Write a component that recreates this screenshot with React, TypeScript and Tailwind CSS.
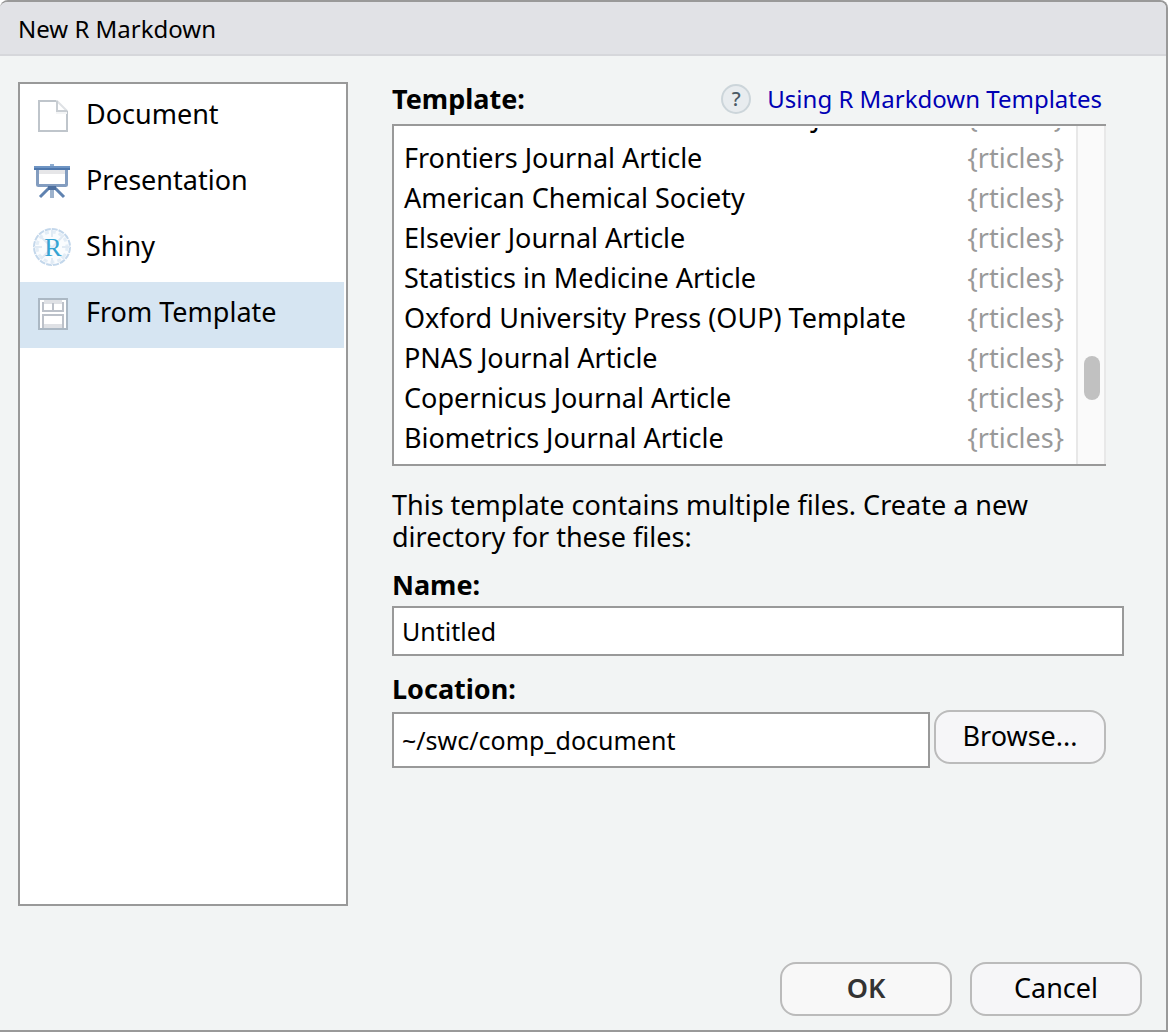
import React, { useState } from 'react';

function DocumentIcon() {
  return (
    <svg width="40" height="40" viewBox="0 0 40 40" fill="none" aria-hidden="true">
      <path d="M7 5H25L35 15V35H7Z" fill="#fff" stroke="#dfe2e5" strokeWidth="2" />
      <path d="M24 5H7V35H35V15" stroke="#bfc5cb" strokeWidth="2" />
      <path d="M24 14h11v4H24z" fill="#f4f5f6" />
      <path d="M25 5V15H35" stroke="#c9ced3" strokeWidth="2" />
    </svg>
  );
}

function PresentationIcon() {
  return (
    <svg width="40" height="40" viewBox="0 0 40 40" fill="none" aria-hidden="true">
      <path d="M18 2h4v3h-4z" fill="#8fadd0" />
      <rect x="5.5" y="7.5" width="29" height="16" rx="1" fill="#fff" stroke="#839dc0" strokeWidth="3" />
      <path d="M7 8h26v4H7z" fill="#e6e6e8" />
      <path d="M2 4h36v2H2z" fill="#6f95c4" />
      <path d="M2 6h36v2H2z" fill="#4f78ad" />
      <path d="M18 25L8 35M22 25L32 35" stroke="#5f82b0" strokeWidth="3" />
      <path d="M18 25h4v11h-4z" fill="#9db2cc" />
      <path d="M16 24h8v4h-8z" fill="#4c6f9f" />
    </svg>
  );
}

function ShinyIcon() {
  return (
    <svg width="40" height="40" viewBox="0 0 40 40" fill="none" aria-hidden="true">
      <circle cx="20" cy="19" r="18" fill="#fafcfe" stroke="#c3d7eb" strokeWidth="2" strokeDasharray="6 1" />
      <circle cx="20" cy="19" r="15" stroke="#e3edf6" strokeWidth="3" strokeDasharray="4 3" />
      <path d="M8 8L32 31M32 7L9 31M20 2V9M2 19H10M30 19H38M20 30V37" stroke="#e0eaf4" strokeWidth="2" />
      <text x="21" y="28" textAnchor="middle" fontFamily="Liberation Serif, serif" fontSize="26" fill="#35a4d3">
        R
      </text>
    </svg>
  );
}

function TemplateIcon() {
  return (
    <svg width="40" height="40" viewBox="0 0 40 40" fill="none" aria-hidden="true">
      <rect x="7" y="5" width="28" height="30" fill="#fff" stroke="#abb8c4" strokeWidth="2" />
      <path d="M12 6h18v4H12z" fill="#dfe1e5" />
      <path d="M11 8v9h20V8M21 9v8" stroke="#bcc1c9" strokeWidth="2" />
      <path d="M11 34V21h20v13" stroke="#bcc1c9" strokeWidth="2" />
      <path d="M12 30h18v4H12z" fill="#dfe1e5" />
    </svg>
  );
}

const categories = [
  { name: 'Document', Icon: DocumentIcon },
  { name: 'Presentation', Icon: PresentationIcon },
  { name: 'Shiny', Icon: ShinyIcon },
  { name: 'From Template', Icon: TemplateIcon },
];

const templates = [
  'American Economic Association Journal',
  'Frontiers Journal Article',
  'American Chemical Society',
  'Elsevier Journal Article',
  'Statistics in Medicine Article',
  'Oxford University Press (OUP) Template',
  'PNAS Journal Article',
  'Copernicus Journal Article',
  'Biometrics Journal Article',
];

const buttonClass =
  'h-[54px] w-[172px] shrink-0 rounded-2xl border-2 border-[#bbb] bg-[#f6f6f8] pb-0.5 text-[27px] leading-8 text-black';

export default function App() {
  const [category, setCategory] = useState('From Template');
  const [name, setName] = useState('Untitled');
  const [location, setLocation] = useState('~/swc/comp_document');

  return (
    <div className="bg-white font-['Noto_Sans',sans-serif] text-black">
      <div
        role="dialog"
        aria-labelledby="dialog-title"
        className="flex min-h-screen flex-col overflow-hidden rounded-t-lg border-t-2 border-r-2 border-b-2 border-[#999] bg-[#f2f4f4]"
      >
        <header className="flex h-[54px] items-center border-b-2 border-[#d6d7db] bg-[#e1e2e6] px-[18px] pt-0.5">
          <h1 id="dialog-title" className="text-[24px] leading-8">
            New R Markdown
          </h1>
        </header>

        <main className="flex flex-1 items-stretch gap-11 pt-[26px] pr-[42px] pl-[18px]">
          <nav className="w-[330px] shrink-0 border-2 border-[#999] bg-white pr-0.5">
            {categories.map(({ name: label, Icon }) => (
              <button
                key={label}
                type="button"
                onClick={() => setCategory(label)}
                className={
                  label === category
                    ? 'flex h-[66px] w-full items-center gap-[14px] bg-[#d6e5f2] pb-0.5 pl-3 text-left text-[27px] leading-8'
                    : 'flex h-[66px] w-full items-center gap-[14px] pb-0.5 pl-3 text-left text-[27px] leading-8'
                }
              >
                <Icon />
                <span className="pb-1">{label}</span>
              </button>
            ))}
          </nav>

          <section className="flex min-w-0 flex-1 flex-col">
            <div className="flex h-[42px] items-center justify-between pr-[22px] pb-2">
              <h2 id="template-label" className="text-[27px] leading-8 font-bold">
                Template:
              </h2>
              <div className="flex items-center gap-4">
                <span
                  aria-hidden="true"
                  className="flex size-[30px] items-center justify-center rounded-full border-2 border-[#ccd5da] bg-[#e8ecef] text-[20px] leading-none font-medium text-[#4a5a66]"
                >
                  ?
                </span>
                <a href="#templates" className="text-[24px] leading-8 whitespace-nowrap text-[#0000b4]">
                  Using R Markdown Templates
                </a>
              </div>
            </div>

            <div className="mr-[18px] flex h-[342px] border-y-2 border-l-2 border-[#999] bg-white">
              <div className="flex min-w-0 flex-1 flex-col pt-0.5 pb-1.5">
                <ul
                  role="listbox"
                  aria-labelledby="template-label"
                  className="flex min-h-0 flex-1 flex-col justify-end overflow-hidden"
                >
                  {templates.map((template) => (
                    <li
                      key={template}
                      role="option"
                      aria-selected="false"
                      className="flex h-10 shrink-0 items-center justify-between pr-3 pl-2.5 text-[27px] leading-10 whitespace-nowrap"
                    >
                      <span>{template}</span>
                      <span className="text-[#999]">{'{rticles}'}</span>
                    </li>
                  ))}
                </ul>
              </div>
              <div className="w-[30px] shrink-0 border-x-2 border-[#e8e8e8] bg-[#fafafa] px-1.5 pt-[230px]">
                <div className="h-11 w-4 rounded-full bg-[#c1c1c1]" />
              </div>
            </div>

            <p className="mt-[23px] text-[27px] leading-8">
              This template contains multiple files. Create a new directory for these files:
            </p>

            <label htmlFor="name" className="mt-4 text-[27px] leading-8 font-bold">
              Name:
            </label>
            <input
              id="name"
              type="text"
              value={name}
              onChange={(event) => setName(event.target.value)}
              className="mt-[5px] h-[50px] w-full border-2 border-[#999] bg-white px-2 text-[25px] outline-none"
            />

            <label htmlFor="location" className="mt-[17px] text-[27px] leading-8 font-bold">
              Location:
            </label>
            <div className="mt-[5px] mr-[18px] flex items-start gap-1">
              <input
                id="location"
                type="text"
                value={location}
                onChange={(event) => setLocation(event.target.value)}
                className="mt-0.5 h-14 min-w-0 flex-1 border-2 border-[#999] bg-white px-2 text-[25px] outline-none"
              />
              <button type="button" className={buttonClass}>
                Browse...
              </button>
            </div>
          </section>
        </main>

        <footer className="flex justify-end gap-[18px] pt-14 pr-6 pb-3.5">
          <button
            type="submit"
            className="h-[54px] w-[172px] shrink-0 rounded-2xl border-2 border-[#bbb] bg-[#f8f8f8] pb-0.5 text-[27px] leading-8 font-semibold text-[#333]"
          >
            OK
          </button>
          <button type="button" className={buttonClass}>
            Cancel
          </button>
        </footer>
      </div>
    </div>
  );
}
